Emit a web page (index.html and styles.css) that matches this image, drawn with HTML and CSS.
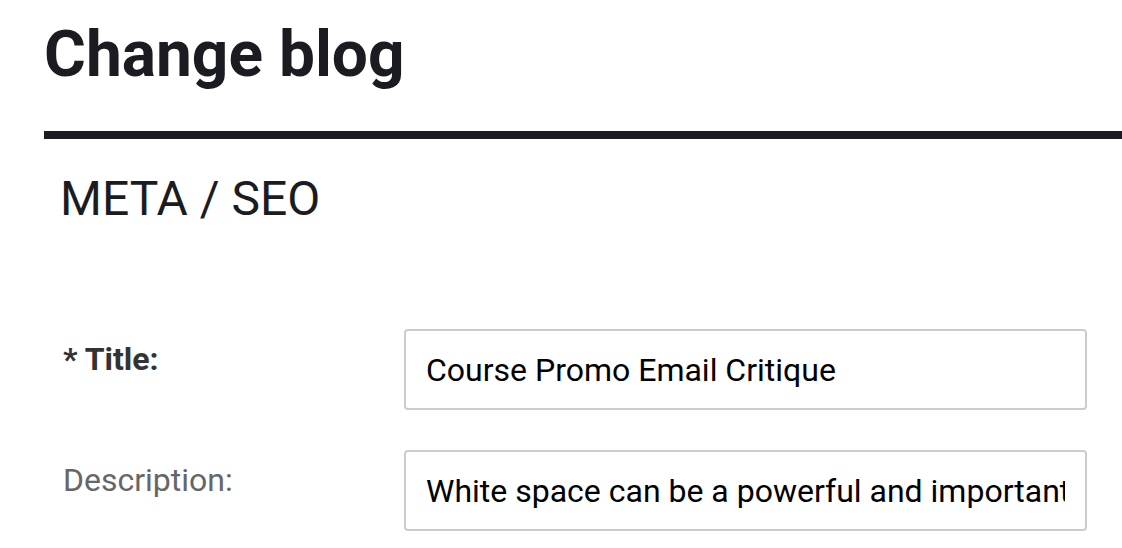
FILE: index.html
```html
<!DOCTYPE html>
<html>
<head>
<meta charset="utf-8">
<link rel="stylesheet" href="styles.css">
</head>
<body>
<div class="page">
  <h1 class="title">Change blog</h1>
  <div class="rule"></div>
  <fieldset class="module">
    <h2 class="module-title">META / SEO</h2>
    <div class="form-row">
      <label class="label required" for="f-title">* Title:</label>
      <input class="field" id="f-title" type="text" value="Course Promo Email Critique">
    </div>
    <div class="form-row">
      <label class="label" for="f-desc">Description:</label>
      <input class="field" id="f-desc" type="text" value="White space can be a powerful and important element of design">
    </div>
  </fieldset>
</div>
</body>
</html>
```

FILE: styles.css
```css
html, body {
  margin: 0;
  padding: 0;
  background: #ffffff;
}
body {
  font-family: Roboto, "Liberation Sans", sans-serif;
  color: #1b1c21;
  overflow: hidden;
}
.page {
  padding-left: 44px;
  padding-top: 23px;
}
.title {
  margin: 0;
  font-size: 64px;
  line-height: 64px;
  font-weight: 700;
  color: #1b1c21;
}
.rule {
  margin-top: 44px;
  height: 8px;
  background: #1b1c21;
}
.module {
  border: 0;
  margin: 0;
  padding: 36px 35px 0 16px;
}
.module-title {
  margin: 0;
  font-size: 48px;
  line-height: 48px;
  font-weight: 400;
  color: #1b1c21;
}
.form-row {
  display: flex;
  align-items: flex-start;
}
.module-title + .form-row {
  margin-top: 106px;
}
.form-row + .form-row {
  margin-top: 40px;
}
.label {
  flex: 0 0 341px;
  padding-left: 3px;
  padding-top: 14px;
  font-size: 32px;
  line-height: 32px;
  color: #666666;
}
.label.required {
  font-weight: 700;
  color: #333333;
}
.field {
  flex: 1;
  min-width: 0;
  box-sizing: border-box;
  height: 81px;
  margin: 0;
  padding: 0 20px;
  border: 2px solid #cccccc;
  border-radius: 4px;
  font-family: Roboto, "Liberation Sans", sans-serif;
  font-size: 32px;
  color: #000000;
  background: #ffffff;
  outline: none;
}
```
